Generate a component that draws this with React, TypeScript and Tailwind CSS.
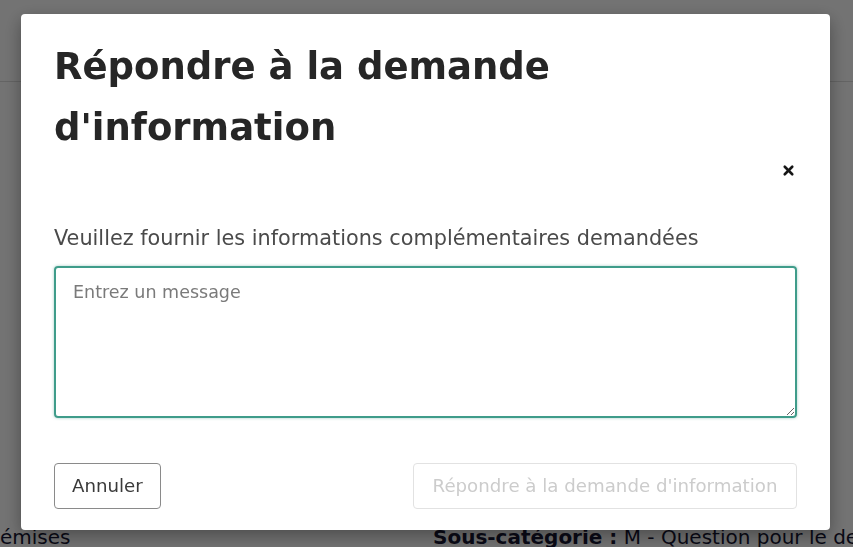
import { X } from 'lucide-react';

export default function App() {
  return (
    <div className="relative h-[547px] w-[853px] overflow-hidden bg-white font-['DejaVu_Sans',sans-serif]">
      {/* page behind the dialog */}
      <div className="h-[82px] border-b border-[#dddddd]" />
      <div className="mt-[443px] flex items-center whitespace-nowrap text-[20px] leading-[24px] text-[#161633]">
        <span className="w-[433px] shrink-0">émises</span>
        <span>
          <b>Sous-catégorie :</b> M - Question pour le destinataire
        </span>
      </div>

      {/* overlay */}
      <div className="fixed inset-0 bg-black/55 pl-[21px] pt-[14px]">
        <div
          role="dialog"
          className="flex h-[516px] w-[809px] flex-col rounded-[4px] bg-white px-[33px] shadow-[0_6px_18px_rgba(0,0,0,0.35)]"
        >
          <h1 className="mt-[22px] w-[560px] text-[37px] font-bold leading-[61px] text-[#262626]">
            Répondre à la demande d'information
          </h1>
          <div className="flex justify-end">
            <button className="mr-[-1px] mt-[2px] flex h-[20px] w-[20px] items-center justify-center text-[#161616]">
              <X size={15} strokeWidth={4.2} />
            </button>
          </div>

          <label
            htmlFor="msg"
            className="mt-[46px] text-[20.8px] leading-[24px] text-[#4a4a4a]"
          >
            Veuillez fournir les informations complémentaires demandées
          </label>
          <textarea
            id="msg"
            autoFocus
            placeholder="Entrez un message"
            className="mt-[16px] h-[152px] w-full resize-y rounded-[4px] border-2 border-[#3f9c8a] px-[17px] py-[12px] text-[17.5px] leading-[24px] text-[#333] shadow-[0_0_3px_rgba(63,156,138,0.5)] outline-none placeholder:text-[#7a7a7a]"
          />

          <div className="mt-[45px] flex items-center justify-between">
            <button className="h-[46px] rounded-[4px] border border-[#8a8a8a] px-[17px] text-[18.2px] text-[#3a3a3a]">
              Annuler
            </button>
            <button
              disabled
              className="h-[46px] w-[384px] rounded-[4px] border border-[#e2e2e2] text-[18.2px] text-[#cccccc]"
            >
              Répondre à la demande d'information
            </button>
          </div>
        </div>
      </div>
    </div>
  );
}
